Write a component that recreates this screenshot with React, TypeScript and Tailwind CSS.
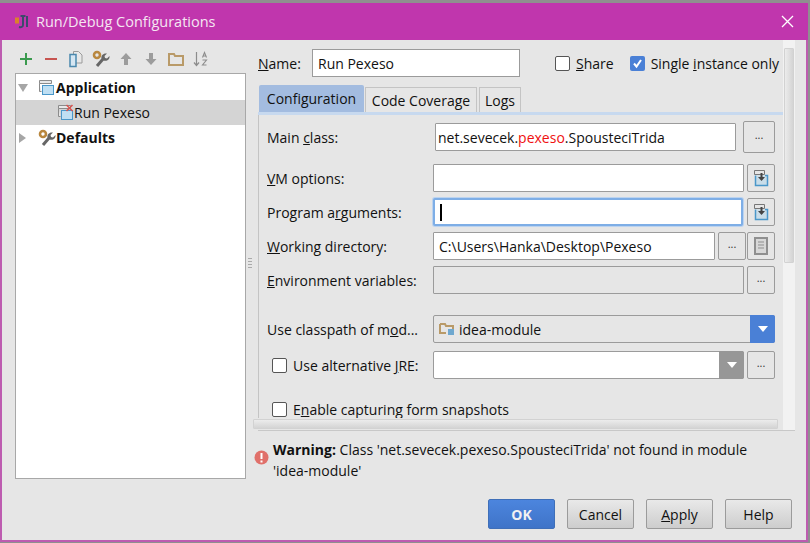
import type { ReactNode } from "react";

function Toolbar() {
  return (
    <div className="flex h-[33px] items-center gap-[7px] pl-[2px] pt-[5px]">
      <svg width="18" height="18" viewBox="0 0 18 18"><path d="M9 3v12M3 9h12" stroke="#3a9a4e" strokeWidth="2" /></svg>
      <svg width="18" height="18" viewBox="0 0 18 18"><path d="M3 9h12" stroke="#c75450" strokeWidth="2" /></svg>
      <svg width="18" height="18" viewBox="0 0 18 18">
        <path d="M6.500 1.500h5l3.500 3.500v8h-8.500z" fill="#e8e8e8" stroke="#9a9a9a" />
        <path d="M3 4.500h6v12h-6z" fill="#d5e6f2" stroke="#4a88ad" strokeWidth="1.500" />
      </svg>
      <WrenchIcon />
      <svg width="18" height="18" viewBox="0 0 18 18"><path d="M9 3l5.500 6h-3.500v6h-4v-6h-3.500z" fill="#9c9c9c" /></svg>
      <svg width="18" height="18" viewBox="0 0 18 18"><path d="M9 15l5.500-6h-3.500v-6h-4v6h-3.500z" fill="#9c9c9c" /></svg>
      <FolderIcon />
      <svg width="18" height="18" viewBox="0 0 18 18">
        <path d="M4.500 2v13M2 12.500l2.500 3 2.500-3" fill="none" stroke="#8c8c8c" strokeWidth="1.200" />
        <path d="M10.500 7.500l2-5 2 5M11.200 6h2.600M10.500 10h4l-4 5h4" fill="none" stroke="#8c8c8c" strokeWidth="1.100" />
      </svg>
    </div>
  );
}

function WrenchIcon() {
  return (
    <svg width="18" height="18" viewBox="0 0 18 18">
      <circle cx="5" cy="5" r="3" fill="none" stroke="#b9873e" strokeWidth="2.600" />
      <path d="M5 16l6-7" stroke="#666" strokeWidth="3" />
      <path d="M9.500 8.500c-.5-3 1.500-5.500 5.500-5l-2.500 2.500.5 2 2 .5 2.500-2.500c.5 3.500-2.500 5.500-6 4.500z" fill="#666" />
    </svg>
  );
}

function FolderIcon() {
  return (
    <svg width="18" height="14" viewBox="0 0 18 14">
      <path d="M2 2h5l1 2h8v9h-14z" fill="none" stroke="#b99a68" strokeWidth="2" />
    </svg>
  );
}

function ConfigIcon({ broken }: { broken?: boolean }) {
  return (
    <svg width="17" height="17" viewBox="0 0 17 17">
      <path d="M1.500 1.500h12v3h-12zM1.500 4.500v8h2" fill="#e8e8e8" stroke="#8b8b8b" />
      <rect x="4.500" y="6.500" width="11" height="9" fill="#bfdff3" stroke="#4a97c9" />
      {broken && <path d="M9.500 1l6 6M15.500 1l-6 6" stroke="#d9534f" strokeWidth="1.500" />}
    </svg>
  );
}

function Tree() {
  return (
    <div className="h-[406px] border border-[#a8a8a8] bg-white pt-[1px]">
      <div className="flex h-[25px] items-center">
        <span className="ml-[2px] h-0 w-0 border-x-[5px] border-t-[8px] border-x-transparent border-t-[#a6a6a6]" />
        <span className="ml-[10px] flex"><ConfigIcon /></span>
        <b className="ml-[1px] font-bold">Application</b>
      </div>
      <div className="flex h-[25px] items-center bg-[#d4d4d4]">
        <span className="ml-[41px] flex"><ConfigIcon broken /></span>
        <span>Run Pexeso</span>
      </div>
      <div className="flex h-[25px] items-center">
        <span className="ml-[3px] h-0 w-0 border-y-[5px] border-l-[7px] border-y-transparent border-l-[#a6a6a6]" />
        <span className="ml-[12px] flex"><WrenchIcon /></span>
        <b className="font-bold">Defaults</b>
      </div>
    </div>
  );
}

function Field({ w, children, className = "" }: { w: number; children?: ReactNode; className?: string }) {
  return (
    <div
      className={`flex h-[28px] items-center rounded-[1px] border border-[#9b9b9b] bg-white pl-[5px] ${className}`}
      style={{ width: w }}
    >
      {children}
    </div>
  );
}

function SmallBtn({ w = 28, h = 28, children }: { w?: number; h?: number; children?: ReactNode }) {
  return (
    <div
      className="flex shrink-0 items-center justify-center rounded-[2px] border border-[#9b9b9b] bg-[#e6e6e6] text-[#333]"
      style={{ width: w, height: h }}
    >
      {children ?? <span className="mb-[4px] text-[11px]">...</span>}
    </div>
  );
}

function ExpandIcon() {
  return (
    <svg width="18" height="18" viewBox="0 0 18 18">
      <path d="M2.500 1.500h10v4h-10z" fill="none" stroke="#777" />
      <path d="M3.500 6.500v10h12v-10h-2.500" fill="#c9dde9" stroke="#4a97c9" strokeWidth="1.500" />
      <path d="M8.500 4h2v4h2.500l-3.500 4-3.500-4h2.500z" fill="#444" />
    </svg>
  );
}

function Row({ label, mt, children }: { label: ReactNode; mt: number; children: ReactNode }) {
  return (
    <div className="flex h-[28px] items-center" style={{ marginTop: mt }}>
      <div className="w-[166px] shrink-0 whitespace-nowrap">{label}</div>
      {children}
    </div>
  );
}

function CheckBox({ checked }: { checked?: boolean }) {
  return checked ? (
    <span className="flex h-[15px] w-[15px] shrink-0 items-center justify-center rounded-[2px] bg-[#4a80d6]">
      <svg width="11" height="11" viewBox="0 0 11 11"><path d="M2 5.500l2.500 3 4.500-6.500" fill="none" stroke="#fff" strokeWidth="2" /></svg>
    </span>
  ) : (
    <span className="h-[15px] w-[15px] shrink-0 rounded-[2px] border border-[#555] bg-white" />
  );
}

function DownArrow() {
  return <span className="h-0 w-0 border-x-[5px] border-t-[6px] border-x-transparent border-t-white" />;
}

function ConfigForm() {
  return (
    <div className="h-[303px] overflow-hidden border-l border-[#c4c4c4] pl-[8px]">
      <Row label={<>Main <u>c</u>lass:</>} mt={8}>
        <div className="ml-[2px]">
          <Field w={301} className="!pl-[2px]">
            net.sevecek.<span className="text-[#f01010]">pexeso</span>.SpousteciTrida
          </Field>
        </div>
        <div className="ml-[7px]"><SmallBtn w={32} h={32} /></div>
      </Row>
      <Row label={<><u>V</u>M options:</>} mt={13}>
        <Field w={311} />
        <div className="ml-[3px]"><SmallBtn><ExpandIcon /></SmallBtn></div>
      </Row>
      <Row label={<>Program a<u>r</u>guments:</>} mt={6}>
        <div className="flex h-[28px] w-[310px] items-center rounded-[2px] border-2 border-[#7eaee6] bg-white pl-[5px] shadow-[0_0_0_1px_#bcd3ef]">
          <span className="h-[17px] w-[2px] bg-black" />
        </div>
        <div className="ml-[4px]"><SmallBtn><ExpandIcon /></SmallBtn></div>
      </Row>
      <Row label={<><u>W</u>orking directory:</>} mt={6}>
        <Field w={282}>C:\Users\Hanka\Desktop\Pexeso</Field>
        <div className="ml-[3px]"><SmallBtn /></div>
        <div className="ml-[1px]">
          <SmallBtn>
            <svg width="14" height="18" viewBox="0 0 14 18">
              <path d="M1 1h12v16h-12z" fill="#d8d8d8" stroke="#8f8f8f" strokeWidth="2" />
              <path d="M4 5h6M4 8h6M4 11h6" stroke="#8f8f8f" />
            </svg>
          </SmallBtn>
        </div>
      </Row>
      <Row label={<><u>E</u>nvironment variables:</>} mt={6}>
        <Field w={311} className="!bg-[#e6e6e6]" />
        <div className="ml-[3px]"><SmallBtn /></div>
      </Row>
      <Row label={<>Use classpath of m<u>o</u>d...</>} mt={21}>
        <div className="flex h-[28px] w-[342px] items-center rounded-[2px] border border-[#9b9b9b] bg-[#e6e6e6] pl-[5px]">
          <svg width="16" height="14" viewBox="0 0 16 14">
            <path d="M1 2h5l1 2h7v3M1 2v9h6" fill="none" stroke="#b99a68" strokeWidth="2" />
            <rect x="9" y="7" width="6" height="6" fill="#6fa8cf" />
          </svg>
          <span className="ml-[4px] flex-1">idea-module</span>
          <span className="-mr-px flex h-[28px] w-[25px] items-center justify-center rounded-r-[2px] bg-[#4a80d6]"><DownArrow /></span>
        </div>
      </Row>
      <Row
        label={
          <span className="flex items-center pl-[5px]">
            <CheckBox />
            <span className="ml-[6px]">Use alternative <u>J</u>RE:</span>
          </span>
        }
        mt={8}
      >
        <div className="flex h-[28px] w-[311px] items-center justify-end rounded-[2px] border border-[#9b9b9b] bg-white">
          <span className="-mr-px flex h-[28px] w-[25px] items-center justify-center rounded-r-[2px] bg-[#979797]"><DownArrow /></span>
        </div>
        <div className="ml-[3px]"><SmallBtn /></div>
      </Row>
      <div className="mt-[20px] flex items-center pl-[5px]">
        <CheckBox />
        <span className="ml-[6px]">E<u>n</u>able capturing form snapshots</span>
      </div>
    </div>
  );
}

function ActionBtn({ children, primary }: { children: ReactNode; primary?: boolean }) {
  return primary ? (
    <div className="flex h-[30px] w-[67px] items-center justify-center rounded-[2px] border border-[#3f6fb8] bg-gradient-to-b from-[#4c85de] to-[#3f74c8] font-bold text-[#f2f2f2]">
      {children}
    </div>
  ) : (
    <div className="flex h-[30px] w-[67px] items-center justify-center rounded-[2px] border border-[#9b9b9b] bg-gradient-to-b from-[#e9e9e9] to-[#cdcdcd]">
      {children}
    </div>
  );
}

export default function App() {
  return (
    <div className="flex h-[543px] w-[810px] flex-col overflow-hidden border-t-[3px] border-r-2 border-b border-[#8f8f8f] bg-[#e6e6e6] font-['Open_Sans',sans-serif] text-[14px] text-[#111]">
      <div className="flex h-[37px] shrink-0 items-center bg-[#c036ad] pl-[14px] pr-[14px] text-[14.500px] text-[#f5e6f2]">
        <svg width="15" height="15" viewBox="0 0 15 15">
          <path d="M1 5h4M1 8h4" stroke="#d9822b" strokeWidth="3" />
          <path d="M6.500 2h5M9 2v9c0 2-2 2.500-4 2M13 2v11" fill="none" stroke="#3b4a6b" strokeWidth="2" />
        </svg>
        <span className="ml-[7px] flex-1">Run/Debug Configurations</span>
        <svg width="13" height="13" viewBox="0 0 13 13"><path d="M1 1l11 11M12 1l-11 11" stroke="#fff" strokeWidth="1.300" /></svg>
      </div>

      <div className="flex flex-1 border-x-2 border-b-2 border-x-[#bd5cb0] border-b-[#bd5cb0]">
        <div className="ml-[13px] w-[231px] shrink-0">
          <Toolbar />
          <Tree />
        </div>

        <div className="flex w-[12px] shrink-0 items-center justify-start pl-[2px]">
          <span className="mt-[-52px] h-[12px] w-[4px] bg-[repeating-linear-gradient(to_bottom,#aaa_0,#aaa_1px,transparent_1px,transparent_3px)]" />
        </div>

        <div className="w-[537px] shrink-0">
          <div className="flex h-[391px] border-b border-[#c8c8c8]">
            <div className="w-[525px] shrink-0">
              <div className="mt-[9px] flex h-[28px] items-center">
                <span className="w-[54px]"><u>N</u>ame:</span>
                <div className="flex h-[28px] w-[208px] items-center border border-[#9b9b9b] bg-white pl-[5px]">Run Pexeso</div>
                <span className="ml-[35px] flex items-center"><CheckBox /><span className="ml-[6px]"><u>S</u>hare</span></span>
                <span className="ml-[16px] flex items-center whitespace-nowrap"><CheckBox checked /><span className="ml-[6px]">Single <u>i</u>nstance only</span></span>
              </div>

              <div className="mt-[8px] flex h-[27px] items-end pl-[1px]">
                <div className="flex h-[27px] w-[105px] items-center justify-center rounded-t-[2px] bg-[#a3bce0]">Configuration</div>
                <div className="ml-[1px] flex h-[25px] w-[112px] items-center justify-center border border-b-0 border-[#c4c4c4]">Code Coverage</div>
                <div className="ml-[2px] flex h-[25px] w-[42px] items-center justify-center border border-b-0 border-[#c4c4c4]">Logs</div>
              </div>
              <div className="h-[3px] bg-[#c7d9ef]" />
              <ConfigForm />
              <div className="ml-[-5px] mt-[1px] h-[10px] w-[525px] rounded-[1px] border border-[#d2d2d2] bg-gradient-to-b from-[#ececec] to-[#d4d4d4]" />
            </div>
            <div className="flex w-[12px] shrink-0 justify-center bg-[#f2f2f2]">
              <div className="mt-[8px] h-[215px] w-[10px] rounded-[1px] border border-[#d2d2d2] bg-gradient-to-r from-[#ececec] to-[#d4d4d4]" />
            </div>
          </div>

          <div className="flex h-[50px] items-start pt-[8px]">
            <svg className="ml-[-4px] mt-[11px] shrink-0" width="15" height="15" viewBox="0 0 15 15">
              <circle cx="7.500" cy="7.500" r="7" fill="#e0706a" />
              <path d="M7.500 3v6M7.500 10.500v2" stroke="#fff" strokeWidth="2" />
            </svg>
            <div className="ml-[4px] leading-[21px]">
              <b className="font-bold">Warning:</b> Class 'net.sevecek.pexeso.SpousteciTrida' not found in module<br />'idea-module'
            </div>
          </div>

          <div className="ml-[230px] mt-[18px] flex gap-[12px]">
            <ActionBtn primary>OK</ActionBtn>
            <ActionBtn>Cancel</ActionBtn>
            <ActionBtn><span><u>A</u>pply</span></ActionBtn>
            <ActionBtn>Help</ActionBtn>
          </div>
        </div>
      </div>
    </div>
  );
}
